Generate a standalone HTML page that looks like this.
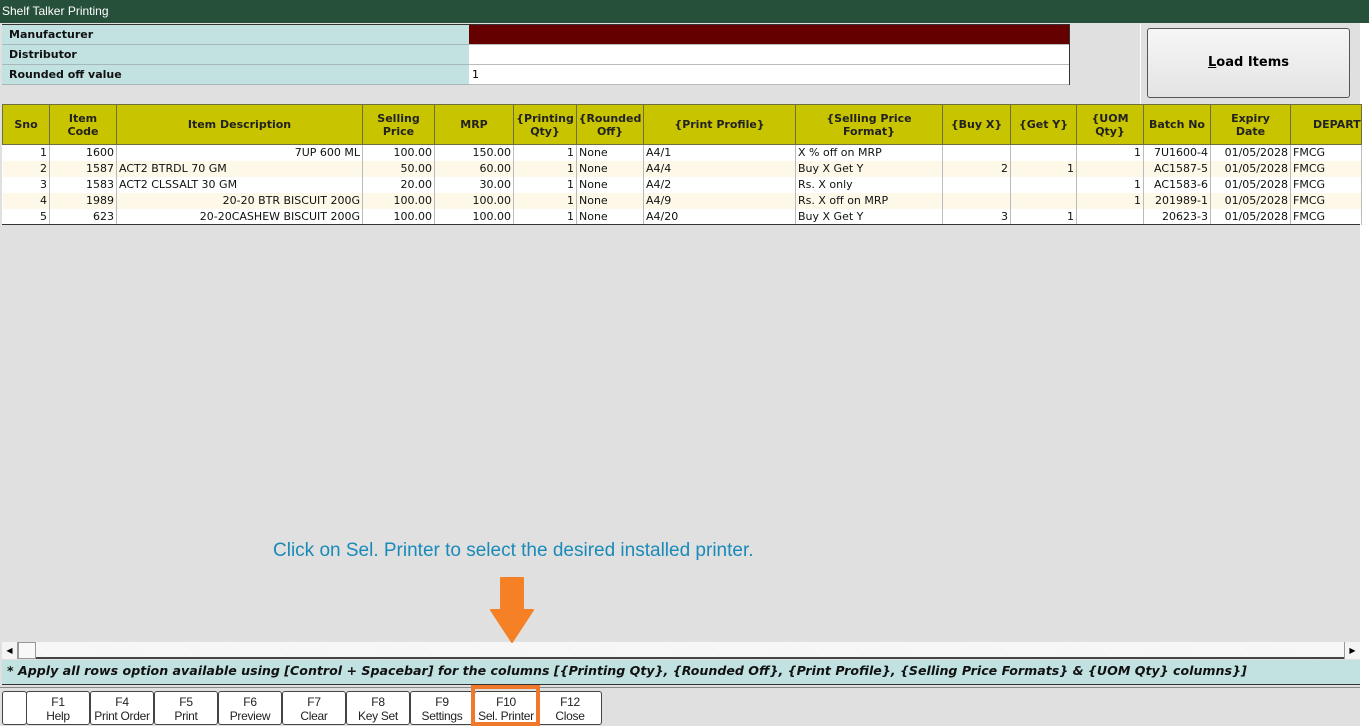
<!DOCTYPE html>
<html><head><meta charset="utf-8"><style>
*{margin:0;padding:0;box-sizing:border-box}
body{width:1369px;height:726px;background:#fff;position:relative;overflow:hidden;font-family:"DejaVu Sans","Liberation Sans",sans-serif}
.a{position:absolute}
.title{left:0;top:0;width:1369px;height:23px;background:#26503a;color:#fff;font:12px "Liberation Sans",sans-serif;line-height:23px;padding-left:2px}
.main{left:0;top:23px;width:1360px;height:703px;background:#e0e0e0}
.lbl{left:2px;width:467px;height:20px;background:#c2e1e1;font-weight:bold;font-size:11px;line-height:20px;padding-left:7px;border-bottom:1px solid #a8b8b8;color:#111}
.val{left:469px;width:600px;height:20px;background:#fff;font-size:11px;line-height:20px;padding-left:3px;border-bottom:1px solid #bbb}
.btn{left:1147px;top:28px;width:203px;height:70px;background:linear-gradient(#f6f6f6,#e4e4e4);border:1px solid #555;border-radius:3px;text-align:center;font-weight:bold;font-size:13px;line-height:68px}
table{position:absolute;left:2px;top:104px;border-collapse:collapse;font-size:11px;table-layout:fixed;background:#fff}
th{background:#c8c400;height:40px;font-size:11px;line-height:13px;border:1px solid #6e6e40;font-weight:bold;color:#222;overflow:hidden;white-space:nowrap}
td{height:16px;border-right:1px solid #bbb;padding:0 2px;white-space:nowrap;overflow:hidden;line-height:15px;color:#111}
tr.o td{background:#fdf8e8}
.r{text-align:right}.c{text-align:center}
.tbot{left:2px;top:224px;width:1358px;height:1px;background:#333}
.sb{left:2px;top:642px;width:1358px;height:17px;background:repeating-linear-gradient(45deg,#f2f2f2 0 1px,#fbfbfb 1px 2px);border-bottom:2px solid #444}
.info{left:2px;top:660px;width:1358px;height:25px;background:#c2e1e1;font-style:italic;font-weight:bold;font-size:12.6px;line-height:22px;padding-left:5px;border-bottom:1px solid #333;color:#111;white-space:nowrap}
.fk{top:691px;height:34px;width:64px;background:#fff;border:1px solid #444;border-radius:3px;text-align:center;font:12px/14px "Liberation Sans",sans-serif;padding-top:3px;color:#222;letter-spacing:-0.3px}
</style></head><body>
<div class="a title">Shelf Talker Printing</div>
<div class="a main"></div>
<div class="a" style="left:2px;top:24px;width:1068px;height:61px;border:1px solid #333;background:#fff"></div>
<div class="a lbl" style="top:25px">Manufacturer</div><div class="a val" style="top:25px;background:#650000"></div>
<div class="a lbl" style="top:45px">Distributor</div><div class="a val" style="top:45px"></div>
<div class="a lbl" style="top:65px">Rounded off value</div><div class="a val" style="top:65px">1</div>
<div class="a" style="left:1140px;top:24px;width:1px;height:80px;background:#fff"></div>
<div class="a btn"><u>L</u>oad Items</div>
<table>
<colgroup><col style="width:47px"><col style="width:67px"><col style="width:246px"><col style="width:72px"><col style="width:79px"><col style="width:63px"><col style="width:67px"><col style="width:152px"><col style="width:147px"><col style="width:68px"><col style="width:66px"><col style="width:67px"><col style="width:67px"><col style="width:80px"><col style="width:70px"></colgroup>
<tr><th>Sno</th><th>Item<br>Code</th><th>Item Description</th><th>Selling<br>Price</th><th>MRP</th><th>{Printing<br>Qty}</th><th>{Rounded<br>Off}</th><th>{Print Profile}</th><th>{Selling Price<br>Format}</th><th>{Buy X}</th><th>{Get Y}</th><th>{UOM<br>Qty}</th><th>Batch No</th><th>Expiry<br>Date</th><th style="text-align:left;padding-left:22px">DEPART</th></tr>
<tr><td class="r">1</td><td class="r">1600</td><td class="r">7UP 600 ML</td><td class="r">100.00</td><td class="r">150.00</td><td class="r">1</td><td>None</td><td>A4/1</td><td>X % off on MRP</td><td></td><td></td><td class="r">1</td><td class="r">7U1600-4</td><td class="r">01/05/2028</td><td>FMCG</td></tr>
<tr class="o"><td class="r">2</td><td class="r">1587</td><td>ACT2 BTRDL 70 GM</td><td class="r">50.00</td><td class="r">60.00</td><td class="r">1</td><td>None</td><td>A4/4</td><td>Buy X Get Y</td><td class="r">2</td><td class="r">1</td><td></td><td class="r">AC1587-5</td><td class="r">01/05/2028</td><td>FMCG</td></tr>
<tr><td class="r">3</td><td class="r">1583</td><td>ACT2 CLSSALT 30 GM</td><td class="r">20.00</td><td class="r">30.00</td><td class="r">1</td><td>None</td><td>A4/2</td><td>Rs. X only</td><td></td><td></td><td class="r">1</td><td class="r">AC1583-6</td><td class="r">01/05/2028</td><td>FMCG</td></tr>
<tr class="o"><td class="r">4</td><td class="r">1989</td><td class="r">20-20 BTR BISCUIT 200G</td><td class="r">100.00</td><td class="r">100.00</td><td class="r">1</td><td>None</td><td>A4/9</td><td>Rs. X off on MRP</td><td></td><td></td><td class="r">1</td><td class="r">201989-1</td><td class="r">01/05/2028</td><td>FMCG</td></tr>
<tr><td class="r">5</td><td class="r">623</td><td class="r">20-20CASHEW BISCUIT 200G</td><td class="r">100.00</td><td class="r">100.00</td><td class="r">1</td><td>None</td><td>A4/20</td><td>Buy X Get Y</td><td class="r">3</td><td class="r">1</td><td></td><td class="r">20623-3</td><td class="r">01/05/2028</td><td>FMCG</td></tr>
</table>
<div class="a tbot"></div>
<div class="a" style="left:273px;top:540px;font:19px 'Liberation Sans',sans-serif;color:#1a8ab8">Click on Sel. Printer to select the desired installed printer.</div>
<div class="a sb"></div>
<div class="a" style="left:2px;top:642px;width:16px;height:17px;background:#f4f4f4;border-right:1px solid #999;font-size:8px;line-height:17px;text-align:center">◀</div>
<div class="a" style="left:18px;top:642px;width:18px;height:17px;background:#f8f8f8;border:1px solid #999"></div>
<div class="a" style="left:1344px;top:642px;width:16px;height:17px;background:#f4f4f4;border-left:1px solid #999;font-size:8px;line-height:17px;text-align:center">▶</div>
<svg class="a" style="left:489px;top:576px" width="46" height="67" viewBox="0 0 46 67"><path d="M12 2 H34 V34 H44 L23 66 L2 34 H12 Z" fill="#f58025" stroke="#f58025" stroke-linejoin="round" stroke-width="2"/></svg>
<div class="a info">* Apply all rows option available using [Control + Spacebar] for the columns [{Printing Qty}, {Rounded Off}, {Print Profile}, {Selling Price Formats} &amp; {UOM Qty} columns}]</div>
<div class="a" style="left:0;top:687px;width:1360px;height:1px;background:#888"></div>
<div class="a fk" style="left:2px;width:25px"></div>
<div class="a fk" style="left:26px">F1<br>Help</div>
<div class="a fk" style="left:90px">F4<br>Print Order</div>
<div class="a fk" style="left:154px">F5<br>Print</div>
<div class="a fk" style="left:218px">F6<br>Preview</div>
<div class="a fk" style="left:282px">F7<br>Clear</div>
<div class="a fk" style="left:346px">F8<br>Key Set</div>
<div class="a fk" style="left:410px">F9<br>Settings</div>
<div class="a fk" style="left:474px">F10<br>Sel. Printer</div>
<div class="a fk" style="left:538px">F12<br>Close</div>
<div class="a" style="left:471px;top:685px;width:69px;height:41px;border:4px solid #f0782a"></div>
</body></html>
